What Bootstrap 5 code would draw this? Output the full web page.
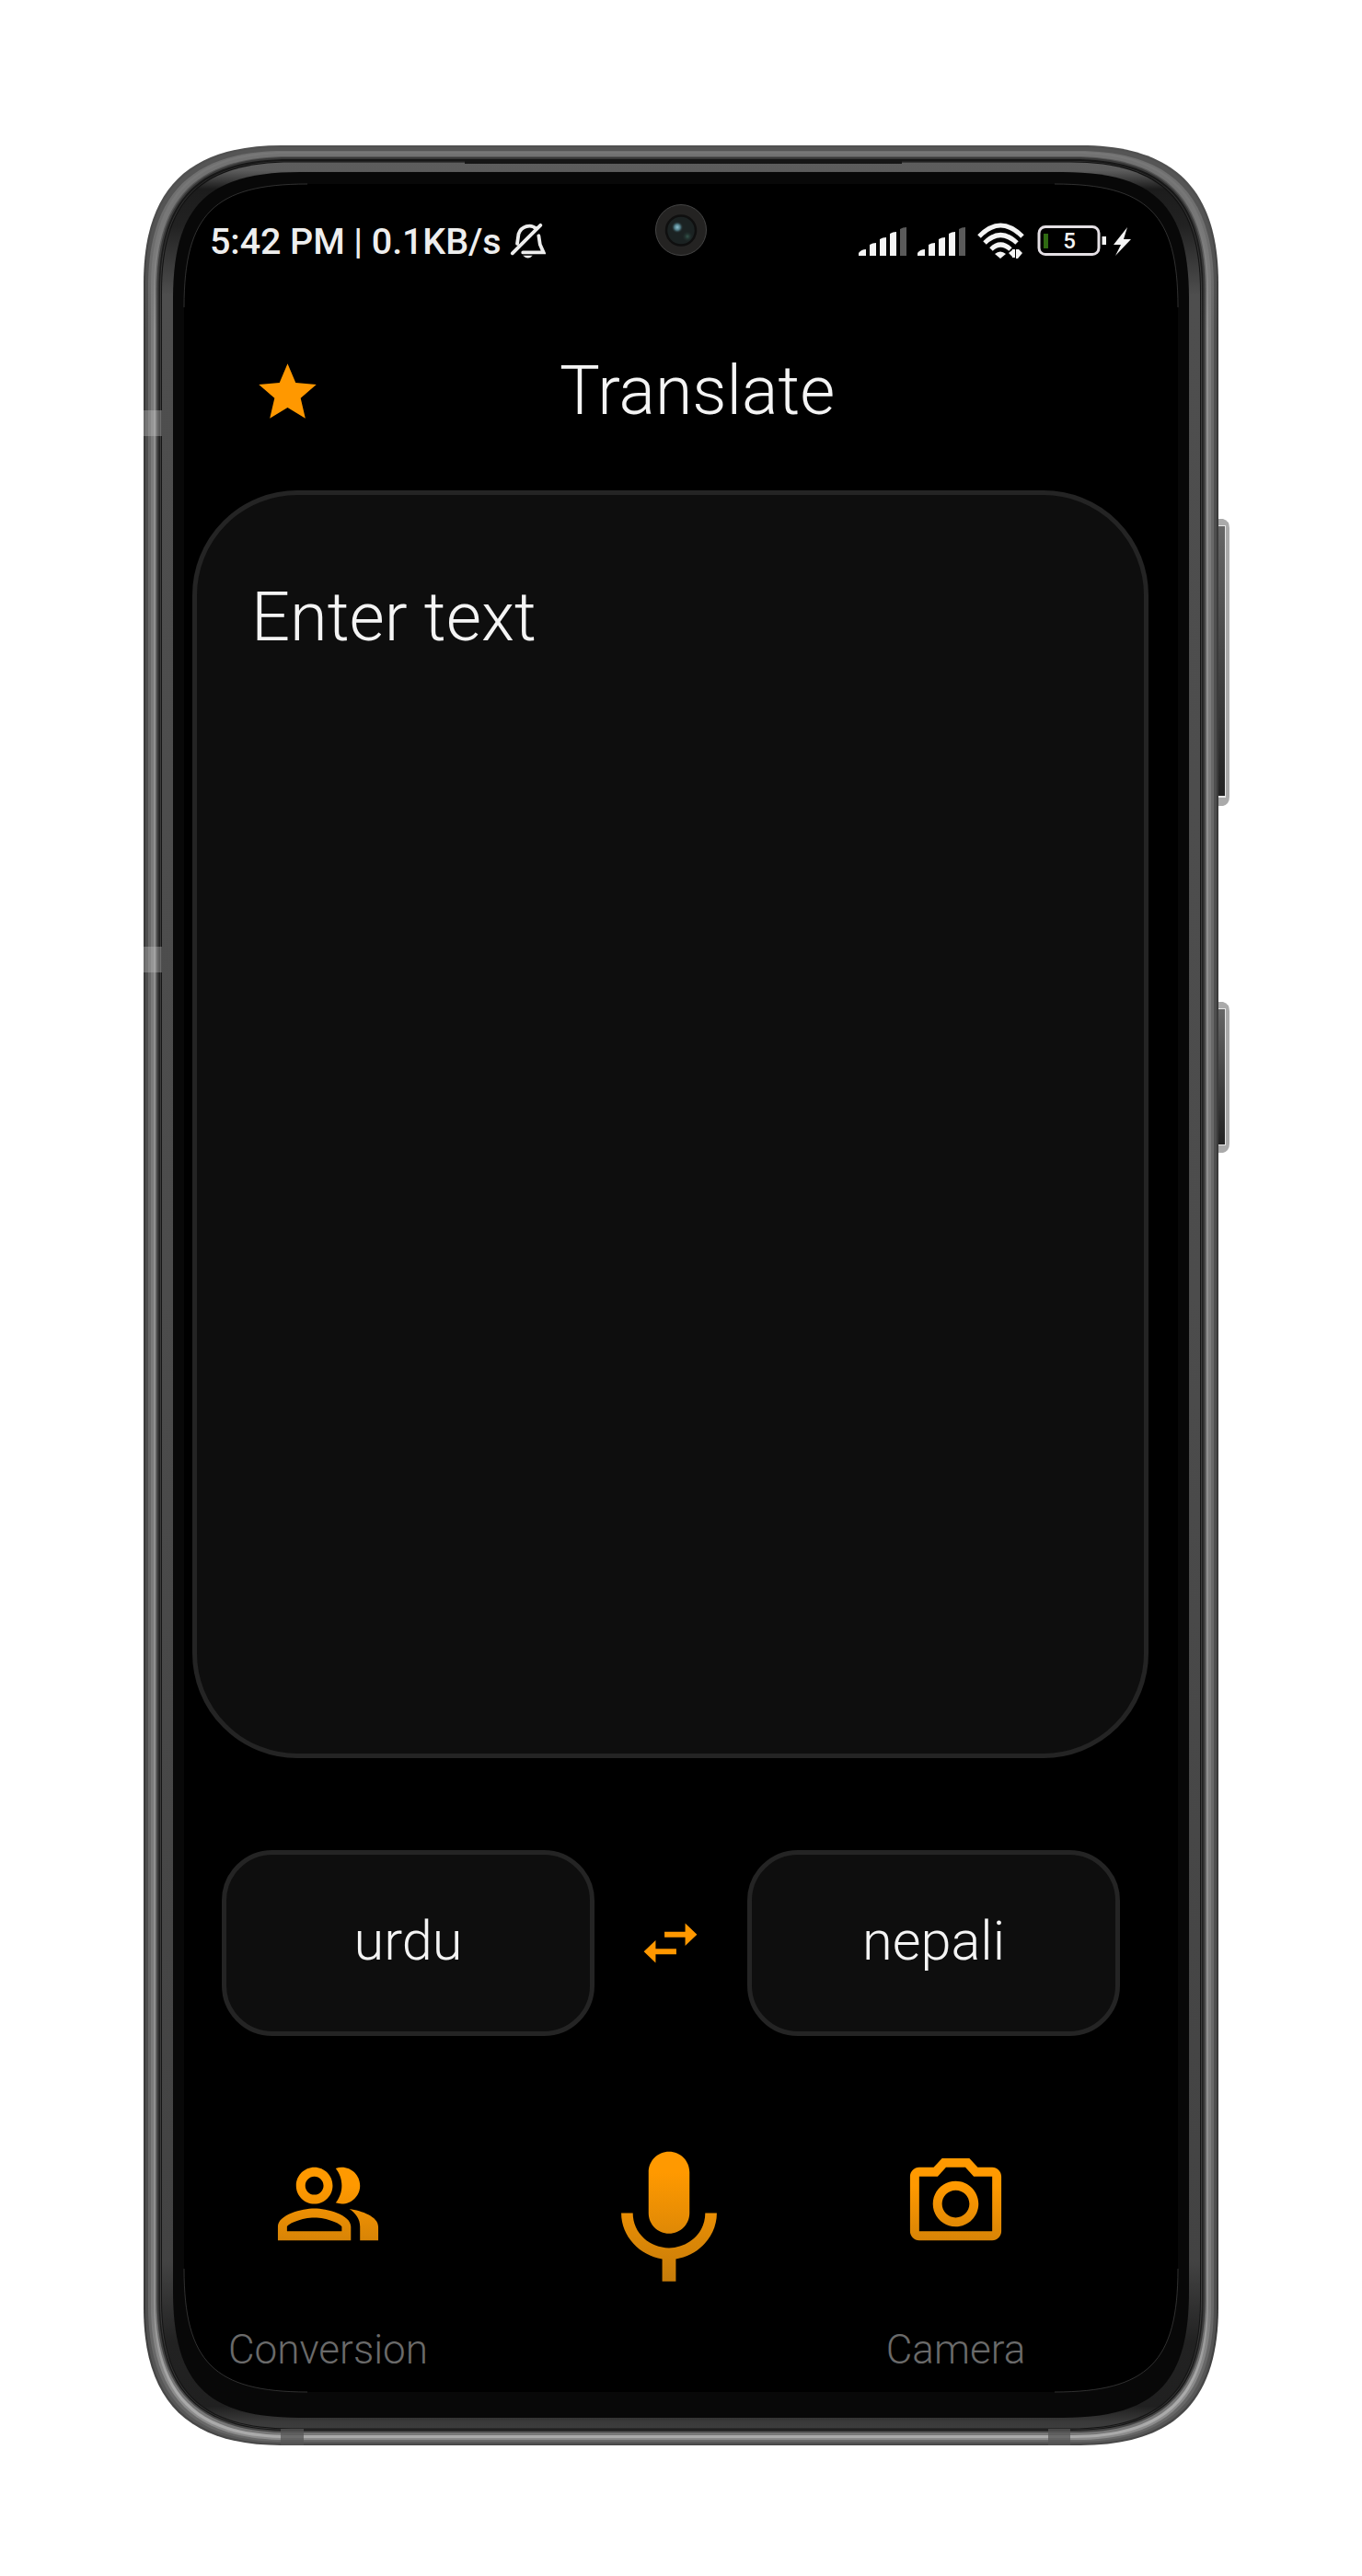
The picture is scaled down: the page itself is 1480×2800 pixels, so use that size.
<!DOCTYPE html>
<html lang="en">
<head>
<meta charset="utf-8">
<meta name="viewport" content="width=device-width, initial-scale=1">
<title>Translate</title>
<link href="https://cdn.jsdelivr.net/npm/bootstrap@5.3.0/dist/css/bootstrap.min.css" rel="stylesheet">
<style>
body{background:#fff;font-family:Roboto,sans-serif;}
.device{width:1180px;height:2500px;margin:158px 0 0 156px;padding:42px 56px 58px 44px;}
.device-art{left:0;top:0;z-index:0;}
.app-screen{z-index:1;color:#f4f4f4;}
.status-bar{height:124px;padding:0 51px 0 28px;}
.status-time{width:325px;font-size:39.5px;font-weight:500;line-height:48px;color:#eee;letter-spacing:-.1px;white-space:pre;padding-top:2px;}
.title-bar{height:209px;padding:65px 0 0 75px;}
.title-bar h1{font-size:73.5px;font-weight:300;line-height:88px;margin:-8px 0 0 258px;white-space:nowrap;}
.panel{background:#0e0e0e;border:5px solid #242424;}
.text-panel{width:1039px;height:1378px;border-radius:114px;margin-left:9px;padding:89px 59px;}
.text-panel span{font-size:74px;font-weight:300;line-height:88px;}
.lang-row{height:302px;padding:100px 63px 0 41px;}
.lang-btn{width:405px;height:202px;border-radius:55px;font-size:59.5px;font-weight:300;line-height:72px;color:#f4f4f4;padding:0 0 4px;}
.swap-icon{margin-right:2px;}
.action-row{padding:111px 0 0 36px;}
.action-item{width:241px;padding-top:12px;}
.mic-icon{margin-left:161px;margin-right:102px;}
.action-label{font-size:44px;font-weight:300;line-height:50px;color:#6a6a6a;margin-top:74px;}
</style>
</head>
<body>
<main class="device position-relative">
<svg class="device-art position-absolute" width="1180" height="2500" viewBox="156 158 1180 2500" aria-hidden="true">
<defs>
<linearGradient id="band" gradientUnits="userSpaceOnUse" x1="0" y1="158" x2="0" y2="2658">
<stop offset="0" stop-color="#5e5e5e"/><stop offset=".011" stop-color="#5c5c5c"/><stop offset=".019" stop-color="#1c1c1c"/><stop offset=".035" stop-color="#222"/><stop offset=".065" stop-color="#4e4e4e"/><stop offset=".5" stop-color="#4c4c4c"/><stop offset=".92" stop-color="#434343"/><stop offset=".955" stop-color="#222"/><stop offset=".983" stop-color="#202020"/><stop offset=".99" stop-color="#3a3a3a"/><stop offset="1" stop-color="#444"/>
</linearGradient>
<linearGradient id="key" x1="0" y1="0" x2="0" y2="1"><stop offset="0" stop-color="#666"/><stop offset="1" stop-color="#222"/></linearGradient>
<linearGradient id="fade-mic" gradientUnits="userSpaceOnUse" x1="0" y1="5" x2="0" y2="21"><stop offset="0" stop-color="#ff9900"/><stop offset="1" stop-color="#c67c0a"/></linearGradient>
<linearGradient id="fade-icon" gradientUnits="userSpaceOnUse" x1="0" y1="8" x2="0" y2="20"><stop offset="0" stop-color="#ff9900"/><stop offset="1" stop-color="#d88406"/></linearGradient>
<radialGradient id="glint"><stop offset="0" stop-color="#8fc4d2"/><stop offset=".5" stop-color="#4d7883"/><stop offset="1" stop-color="#1b2424" stop-opacity="0"/></radialGradient>
<radialGradient id="glint2"><stop offset="0" stop-color="#34574c"/><stop offset="1" stop-color="#1b2424" stop-opacity="0"/></radialGradient>
</defs>
<g id="keys">
<path d="M1320 564h9q7 2 7 10v292q0 8-7 10h-9z" fill="#aaa"/><path d="M1324 571h8v296h-8z" fill="#e6e6e6"/><path d="M1324 572h7v293h-7z" fill="url(#key)"/>
<path d="M1320 1089h9q7 2 7 10v144q0 8-7 10h-9z" fill="#aaa"/><path d="M1324 1096h8v149h-8z" fill="#e6e6e6"/><path d="M1324 1097h7v147h-7z" fill="url(#key)"/>
</g>
<g id="shell"></g>
<path d="M505 174.500h475v3.500h-475z" fill="#161616"/>
<path d="M156 446h20v28h-20zM156 1029h20v28h-20z" fill="#ccc" fill-opacity=".33"/>
<path d="M305 2640h25v18h-25zM1139 2640h24v18h-24z" fill="#555" fill-opacity=".75"/>
<circle cx="740" cy="250" r="27.500" fill="#242322" stroke="#454545"/>
<circle cx="740" cy="250.500" r="16" fill="#1b2222" stroke="#0f0f0f" stroke-width="2.500"/>
<circle cx="747" cy="257" r="6" fill="url(#glint2)"/>
<circle cx="736" cy="247" r="6.500" fill="url(#glint)"/>
</svg>

<div class="app-screen position-relative d-flex flex-column h-100">
<div class="status-bar d-flex align-items-center justify-content-between">
<div class="d-flex align-items-center">
<span class="status-time">5:42 PM | 0.1KB/s</span>
<svg width="40" height="42" viewBox="0 0 42 42" fill="none" stroke="#eee" stroke-width="4"><path d="M36 3 4 35M31 7C25 1 14 4 11 13L9.500 24M34 15l1.500 10 4 9H16" stroke-linecap="round"/><path d="M16 37.500h11q-5 6-11 0z" fill="#eee" stroke="none"/></svg>
</div>
<svg width="297" height="42" viewBox="932 240 297 42" fill="#f4f4f4">
<g id="sig"><path d="M933 277v-3q3-4 8-4v7zM945 277v-12q3-2 7-2v14zM956 277v-18q3-2 7-2v20zM967 277v-24q3-2 7-2v26z"/><path d="M978 277v-29q3-2 7-2v31z" fill="#5a5a5a"/></g>
<use href="#sig" x="64"/>
<g fill="none" stroke="#f4f4f4" stroke-width="5"><path d="M1064 256Q1087 232 1111 256"/><path d="M1070 263Q1087 246 1105 263"/><path d="M1077 270Q1087 260 1098 270"/></g>
<path d="M1081 275q6-5 12 0l-6 5zM1096 274l5-4v9zM1100 270h3v9h-3zM1104 270h3l4 4-5 6h-2z"/>
<rect x="1129" y="245.500" width="65" height="30" rx="7" fill="none" stroke="#e4dfe4" stroke-width="3"/>
<path d="M1134 253h5v16h-5z" fill="#2f6a12"/><path d="M1197.500 256h4.500v9h-4.500z"/>
<text x="1162" y="269" font-size="24" font-weight="500" text-anchor="middle">5</text>
<path d="M1225 246 1210 265h8l-6 12 17-18h-8z"/>
</svg>
</div>

<header class="title-bar d-flex align-items-start">
<svg width="75" height="75" viewBox="0 0 24 24" fill="#ff9800"><path d="M12 17.270 18.180 21l-1.640-7.030L22 9.240l-7.190-.61L12 2 9.190 8.630 2 9.240l5.460 4.730L5.820 21z"/></svg>
<h1>Translate</h1>
</header>

<section class="text-panel panel"><span>Enter text</span></section>

<section class="lang-row d-flex align-items-center justify-content-between">
<button class="btn lang-btn panel">urdu</button>
<svg class="swap-icon" width="77" height="74" viewBox="0 0 24 24" preserveAspectRatio="none" fill="#ff9800"><path d="M6.990 11 3 15l3.990 4v-3H14v-2H6.990v-3zM21 9l-3.990-4v3H10v2h7.010v3L21 9z"/></svg>
<button class="btn lang-btn panel">nepali</button>
</section>

<nav class="action-row d-flex align-items-start">
<div class="action-item d-flex flex-column align-items-center">
<svg width="119" height="119" viewBox="0 0 24 24" fill="url(#fade-icon)"><path d="M16.670 13.130C18.040 14.060 19 15.320 19 17v3h4v-3c0-2.180-3.570-3.470-6.330-3.870zM15 12c2.210 0 4-1.790 4-4s-1.790-4-4-4c-.47 0-.91.1-1.330.24C14.500 5.270 15 6.580 15 8s-.5 2.730-1.330 3.760c.42.14.86.24 1.330.24zM9 12c2.210 0 4-1.790 4-4s-1.790-4-4-4-4 1.790-4 4 1.790 4 4 4zm0-6c1.100 0 2 .9 2 2s-.9 2-2 2-2-.9-2-2 .9-2 2-2zM9 13c-2.670 0-8 1.340-8 4v3h16v-3c0-2.660-5.330-4-8-4zm6 5H3v-.990C3.200 16.290 6.300 15 9 15s5.800 1.290 6 2v1z"/></svg>
<span class="action-label">Conversion</span>
</div>
<svg class="mic-icon" width="178" height="178" viewBox="0 0 24 24" fill="url(#fade-mic)"><path d="M12 14c1.660 0 3-1.340 3-3V5c0-1.660-1.340-3-3-3S9 3.340 9 5v6c0 1.660 1.340 3 3 3zM17.300 11c0 3-2.540 5.100-5.300 5.100S6.700 14 6.700 11H5c0 3.410 2.720 6.230 6 6.720V21h2v-3.280c3.280-.48 6-3.300 6-6.720z"/></svg>
<div class="action-item d-flex flex-column align-items-center">
<svg width="119" height="119" viewBox="0 0 24 24" fill="url(#fade-icon)"><path d="M14.120 4l1.830 2H20v12H4V6h4.050l1.830-2h4.240M15 2H9L7.170 4H4c-1.100 0-2 .9-2 2v12c0 1.100.9 2 2 2h16c1.100 0 2-.9 2-2V6c0-1.100-.9-2-2-2h-3.170L15 2zm-3 7c1.650 0 3 1.350 3 3s-1.350 3-3 3-3-1.350-3-3 1.350-3 3-3m0-2c-2.760 0-5 2.240-5 5s2.240 5 5 5 5-2.240 5-5-2.240-5-5-5z"/></svg>
<span class="action-label">Camera</span>
</div>
</nav>
</div>
</main>
<script>
// Nested outlines of the metal frame, from the outer edge to the glass.
// [side, top, bottom inset, corner extent, handle ratio, top / side / bottom colour]
const rings=[
[0,0,0,150,.32,'#505050','#3a3a3a','#484848'],
[2,2,2,149,.32,'#555','#4e4e4e','#585858'],
[5,6,4,148,.32,'#707070','#686868','#686868'],
[8,7,6,147,.32,'#777','#7c7c7c','#8c8c8c'],
[11,9,8,146,.31,'#727272','#909090','#aaa'],
[13,12,11,145,.31,'#555','#666','#777'],
[14.5,13,14,144,.31,'#383838','#3a3a3a','#444'],
[16.5,15,16,143,.3,'#161616','#202020','#151515'],
[18,17,17,142,.3,'#333','#3c3c3c','#383838'],
[19,17.5,17.5,141,.3,'#111','#141414','#141414'],
[20,18.5,18.5,141,.3,'url(#band)'],
[32,29,30,138,.27,'#080808'],
[44,42,58,134,.244,'#000']];
function outline(s,t,b,e,k){const l=156+s,r=1324-s,u=158+t,d=2658-b,h=e*k;
return `M${l} ${u+e}C${l} ${u+h} ${l+h} ${u} ${l+e} ${u}H${r-e}C${r-h} ${u} ${r} ${u+h} ${r} ${u+e}V${d-e}C${r} ${d-h} ${r-h} ${d} ${r-e} ${d}H${l+e}C${l+h} ${d} ${l} ${d-h} ${l} ${d-e}Z`}
let out='';
rings.forEach(([s,t,b,e,k,c1,c2,c3],i)=>{let f=c1;
if(c2){out+=`<linearGradient id="ring${i}" gradientUnits="userSpaceOnUse" x1="0" y1="158" x2="0" y2="2658"><stop offset=".02" stop-color="${c1}"/><stop offset=".08" stop-color="${c2}"/><stop offset=".94" stop-color="${c2}"/><stop offset=".975" stop-color="${c3}"/></linearGradient>`;f=`url(#ring${i})`}
out+=`<path d="${outline(s,t,b,e,k)}" fill="${f}"/>`});
// thin glints on the rounded corners of the display
const e=134,h=e*.244,L=200,R=1280,U=200,D=2600;
out+=`<path d="M${L} ${U+e}C${L} ${U+h} ${L+h} ${U} ${L+e} ${U}M${R-e} ${U}C${R-h} ${U} ${R} ${U+h} ${R} ${U+e}M${R} ${D-e}C${R} ${D-h} ${R-h} ${D} ${R-e} ${D}M${L+e} ${D}C${L+h} ${D} ${L} ${D-h} ${L} ${D-e}" fill="none" stroke="#444" stroke-width=".7"/>`;
document.getElementById('shell').innerHTML=out;
</script>
<script src="https://cdn.jsdelivr.net/npm/bootstrap@5.3.0/dist/js/bootstrap.bundle.min.js"></script>
</body>
</html>
